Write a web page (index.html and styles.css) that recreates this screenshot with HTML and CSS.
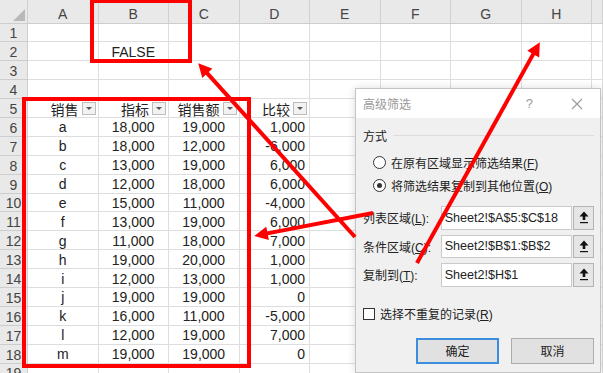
FILE: index.html
```html
<!DOCTYPE html>
<html lang="zh-CN">

<head>
  <meta charset="UTF-8">
  <meta name="viewport" content="width=device-width, initial-scale=1.0">
  <title>高级筛选</title>
  <link rel="stylesheet" href="styles.css">
</head>

<body>
  <div id="sheet">
    <div class="corner"></div><div class="col-hd">A</div><div class="col-hd">B</div><div class="col-hd">C</div><div class="col-hd">D</div><div class="col-hd">E</div><div class="col-hd">F</div><div class="col-hd">G</div><div class="col-hd">H</div><div class="col-hd"></div>

    <div class="row-hd">1</div><div class="cell"></div><div class="cell"></div><div class="cell"></div><div class="cell"></div><div class="cell"></div><div class="cell"></div><div class="cell"></div><div class="cell"></div><div class="cell"></div>
    <div class="row-hd">2</div><div class="cell"></div><div class="cell c">FALSE</div><div class="cell"></div><div class="cell"></div><div class="cell"></div><div class="cell"></div><div class="cell"></div><div class="cell"></div><div class="cell"></div>
    <div class="row-hd">3</div><div class="cell"></div><div class="cell"></div><div class="cell"></div><div class="cell"></div><div class="cell"></div><div class="cell"></div><div class="cell"></div><div class="cell"></div><div class="cell"></div>
    <div class="row-hd">4</div><div class="cell"></div><div class="cell"></div><div class="cell"></div><div class="cell"></div><div class="cell"></div><div class="cell"></div><div class="cell"></div><div class="cell"></div><div class="cell"></div>
    <div class="row-hd">5</div>
    <div class="cell th"><span>销售</span><i class="drop"></i></div>
    <div class="cell th"><span>指标</span><i class="drop"></i></div>
    <div class="cell th"><span>销售额</span><i class="drop"></i></div>
    <div class="cell th"><span>比较</span><i class="drop"></i></div>
    <div class="cell"></div><div class="cell"></div><div class="cell"></div><div class="cell"></div><div class="cell"></div>

    <div class="row-hd">6</div><div class="cell c">a</div><div class="cell c">18,000</div><div class="cell c">19,000</div><div class="cell r">1,000</div><div class="cell"></div><div class="cell"></div><div class="cell"></div><div class="cell"></div><div class="cell"></div>
    <div class="row-hd">7</div><div class="cell c">b</div><div class="cell c">18,000</div><div class="cell c">12,000</div><div class="cell r">-6,000</div><div class="cell"></div><div class="cell"></div><div class="cell"></div><div class="cell"></div><div class="cell"></div>
    <div class="row-hd">8</div><div class="cell c">c</div><div class="cell c">13,000</div><div class="cell c">19,000</div><div class="cell r">6,000</div><div class="cell"></div><div class="cell"></div><div class="cell"></div><div class="cell"></div><div class="cell"></div>
    <div class="row-hd">9</div><div class="cell c">d</div><div class="cell c">12,000</div><div class="cell c">18,000</div><div class="cell r">6,000</div><div class="cell"></div><div class="cell"></div><div class="cell"></div><div class="cell"></div><div class="cell"></div>
    <div class="row-hd">10</div><div class="cell c">e</div><div class="cell c">15,000</div><div class="cell c">11,000</div><div class="cell r">-4,000</div><div class="cell"></div><div class="cell"></div><div class="cell"></div><div class="cell"></div><div class="cell"></div>
    <div class="row-hd">11</div><div class="cell c">f</div><div class="cell c">13,000</div><div class="cell c">19,000</div><div class="cell r">6,000</div><div class="cell"></div><div class="cell"></div><div class="cell"></div><div class="cell"></div><div class="cell"></div>
    <div class="row-hd">12</div><div class="cell c">g</div><div class="cell c">11,000</div><div class="cell c">18,000</div><div class="cell r">7,000</div><div class="cell"></div><div class="cell"></div><div class="cell"></div><div class="cell"></div><div class="cell"></div>
    <div class="row-hd">13</div><div class="cell c">h</div><div class="cell c">19,000</div><div class="cell c">20,000</div><div class="cell r">1,000</div><div class="cell"></div><div class="cell"></div><div class="cell"></div><div class="cell"></div><div class="cell"></div>
    <div class="row-hd">14</div><div class="cell c">i</div><div class="cell c">12,000</div><div class="cell c">13,000</div><div class="cell r">1,000</div><div class="cell"></div><div class="cell"></div><div class="cell"></div><div class="cell"></div><div class="cell"></div>
    <div class="row-hd">15</div><div class="cell c">j</div><div class="cell c">19,000</div><div class="cell c">19,000</div><div class="cell r">0</div><div class="cell"></div><div class="cell"></div><div class="cell"></div><div class="cell"></div><div class="cell"></div>
    <div class="row-hd">16</div><div class="cell c">k</div><div class="cell c">16,000</div><div class="cell c">11,000</div><div class="cell r">-5,000</div><div class="cell"></div><div class="cell"></div><div class="cell"></div><div class="cell"></div><div class="cell"></div>
    <div class="row-hd">17</div><div class="cell c">l</div><div class="cell c">12,000</div><div class="cell c">19,000</div><div class="cell r">7,000</div><div class="cell"></div><div class="cell"></div><div class="cell"></div><div class="cell"></div><div class="cell"></div>
    <div class="row-hd">18</div><div class="cell c">m</div><div class="cell c">19,000</div><div class="cell c">19,000</div><div class="cell r">0</div><div class="cell"></div><div class="cell"></div><div class="cell"></div><div class="cell"></div><div class="cell"></div>
    <div class="row-hd">19</div><div class="cell"></div><div class="cell"></div><div class="cell"></div><div class="cell"></div><div class="cell"></div><div class="cell"></div><div class="cell"></div><div class="cell"></div><div class="cell"></div>
  </div>

  <!-- 高级筛选 对话框 -->
  <div id="dialog">
    <div class="dlg-title">
      <span class="dlg-name">高级筛选</span>
      <span class="help">?</span>
      <svg class="close" width="12" height="12" viewBox="0 0 12 12"><path d="M1 1L11 11M11 1L1 11" stroke="#9a9a9a" stroke-width="1.1" fill="none"/></svg>
    </div>
    <div class="dlg-body">
      <div class="group"><span>方式</span></div>
      <div class="opt first"><i class="radio"></i><span>在原有区域显示筛选结果(<u>F</u>)</span></div>
      <div class="opt"><i class="radio on"></i><span>将筛选结果复制到其他位置(<u>O</u>)</span></div>

      <div class="field first">
        <span class="lbl">列表区域(<u>L</u>):</span>
        <div class="ref">Sheet2!$A$5:$C$18</div>
        <div class="pick"><svg width="10" height="13" viewBox="0 0 10 13"><path d="M5 0.5L9.5 5.5H6.3V9H3.7V5.5H0.5Z" fill="#111"/><rect x="1" y="11" width="8" height="1.2" fill="#111"/></svg></div>
      </div>
      <div class="field">
        <span class="lbl">条件区域(<u>C</u>):</span>
        <div class="ref">Sheet2!$B$1:$B$2</div>
        <div class="pick"><svg width="10" height="13" viewBox="0 0 10 13"><path d="M5 0.5L9.5 5.5H6.3V9H3.7V5.5H0.5Z" fill="#111"/><rect x="1" y="11" width="8" height="1.2" fill="#111"/></svg></div>
      </div>
      <div class="field">
        <span class="lbl">复制到(<u>T</u>):</span>
        <div class="ref">Sheet2!$H$1</div>
        <div class="pick"><svg width="10" height="13" viewBox="0 0 10 13"><path d="M5 0.5L9.5 5.5H6.3V9H3.7V5.5H0.5Z" fill="#111"/><rect x="1" y="11" width="8" height="1.2" fill="#111"/></svg></div>
      </div>

      <div class="chk"><i class="box"></i><span>选择不重复的记录(<u>R</u>)</span></div>

      <div class="actions">
        <button type="button" class="btn primary">确定</button>
        <button type="button" class="btn">取消</button>
      </div>
    </div>
  </div>

  <!-- 红色标注 -->
  <div class="mark mark-b"></div>
  <div class="mark mark-list"></div>
  <svg class="arrows" width="603" height="373" viewBox="0 0 603 373">
    <defs>
      <marker id="head" viewBox="0 0 10 10" refX="3" refY="5" markerWidth="3.6" markerHeight="3.4" orient="auto">
        <path d="M0 0L10 5L0 10Z" fill="#f00"/>
      </marker>
    </defs>
    <line x1="355" y1="237" x2="204.6" y2="70.3" stroke="#f00" stroke-width="4" marker-end="url(#head)"/>
    <line x1="373" y1="213" x2="263.6" y2="234.1" stroke="#f00" stroke-width="4" marker-end="url(#head)"/>
    <line x1="417" y1="263" x2="535.2" y2="50.6" stroke="#f00" stroke-width="4" marker-end="url(#head)"/>
  </svg>
</body>

</html>
```

FILE: styles.css
```css
* {
  box-sizing: border-box;
}

html,
body {
  margin: 0;
  padding: 0;
  overflow: hidden;
}

body {
  position: relative;
  width: 603px;
  height: 373px;
  background-color: #fff;
  font-family: "Liberation Sans", "Noto Sans CJK SC", sans-serif;
  color: #222;
}

/* 表格部分 */
#sheet {
  display: grid;
  grid-template-columns: 28px repeat(8, 70.5px) 1fr;
  grid-template-rows: 23.5px;
  grid-auto-rows: 18.9px;
  font-size: 14px;
}

.corner,
.col-hd,
.row-hd {
  background-color: #e9e9e9;
  border-right: 1px solid #d0d0d0;
  border-bottom: 1px solid #cdcdcd;
  color: #444;
  display: flex;
  justify-content: center;
  align-items: center;
}

.col-hd {
  padding-top: 6px;
}

.row-hd {
  padding-top: 2px;
}

.corner {
  position: relative;
}

.corner::after {
  content: "";
  position: absolute;
  right: 2px;
  bottom: 2px;
  border-left: 12px solid transparent;
  border-bottom: 12px solid #b9b9b9;
}

.cell {
  display: flex;
  align-items: center;
  padding: 0 4px;
  padding-top: 1px;
  border-right: 1px solid #dedede;
  border-bottom: 1px solid #dedede;
  white-space: nowrap;
  overflow: hidden;
}

.c {
  justify-content: center;
}

.r {
  justify-content: flex-end;
}

.th {
  justify-content: flex-end;
  gap: 3px;
  padding-right: 2px;
}

.drop {
  position: relative;
  width: 14px;
  height: 13px;
  border: 1px solid #bdbdbd;
  background-color: #f2f2f2;
}

.drop::after {
  content: "";
  position: absolute;
  left: 3px;
  top: 4px;
  border-left: 3px solid transparent;
  border-right: 3px solid transparent;
  border-top: 3px solid #555;
}

/* 对话框 */
#dialog {
  position: absolute;
  left: 355px;
  top: 88px;
  width: 246px;
  height: 285px;
  border: 1px solid #c4c4c4;
  background-color: #f0f0f0;
  box-shadow: 0 0 8px rgba(0, 0, 0, 0.15);
  font-size: 12px;
}

.dlg-title {
  display: flex;
  align-items: center;
  height: 29px;
  padding: 0 0 0 7px;
  background-color: #fff;
  color: #999;
}

.dlg-name {
  flex: 1;
}

.help {
  margin-right: 38px;
  font-size: 13px;
}

.close {
  margin-right: 17px;
}

.dlg-body {
  display: flex;
  flex-direction: column;
  padding: 8px 6px 0 7px;
}

.group {
  display: flex;
  align-items: center;
  gap: 6px;
  height: 18px;
}

.group::after {
  content: "";
  flex: 1;
  height: 1px;
  background-color: #dcdcdc;
}

.opt {
  display: flex;
  align-items: center;
  gap: 5px;
  height: 18px;
  margin-top: 5px;
  padding-left: 10px;
}

.opt.first {
  margin-top: 9px;
}

.radio {
  position: relative;
  width: 13px;
  height: 13px;
  border: 1px solid #333;
  border-radius: 50%;
  background-color: #fff;
}

.radio.on::after {
  content: "";
  position: absolute;
  left: 3px;
  top: 3px;
  width: 5px;
  height: 5px;
  border-radius: 50%;
  background-color: #333;
}

.field {
  display: flex;
  align-items: center;
  height: 23.5px;
  margin-top: 5px;
}

.field.first {
  margin-top: 12px;
}

.lbl {
  width: 78px;
}

.ref {
  width: 132px;
  height: 100%;
  display: flex;
  align-items: center;
  padding-left: 3px;
  border: 1px solid #cacaca;
  background-color: #fff;
  font-size: 12.6px;
  white-space: nowrap;
  overflow: hidden;
}

.pick {
  width: 21px;
  height: 100%;
  margin-left: 1px;
  display: flex;
  align-items: center;
  justify-content: center;
  border: 1px solid #b4b4b4;
  background-color: #e5e5e5;
}

.chk {
  display: flex;
  align-items: center;
  gap: 5px;
  height: 18px;
  margin-top: 18px;
}

.box {
  width: 12px;
  height: 12px;
  border: 1px solid #333;
  background-color: #fff;
}

.actions {
  display: flex;
  justify-content: flex-end;
  gap: 12px;
  margin-top: 15px;
}

.btn {
  width: 83px;
  height: 26px;
  padding: 0;
  border: 1px solid #adadad;
  background-color: #e1e1e1;
  font-family: inherit;
  font-size: 12px;
  color: #222;
}

.btn.primary {
  border: 2px solid #3b8ddd;
}

/* 红框和箭头 */
.mark {
  position: absolute;
  border: 4px solid #f00;
}

.mark-b {
  left: 90px;
  top: -1px;
  width: 102px;
  height: 64px;
}

.mark-list {
  left: 22px;
  top: 97px;
  width: 229px;
  height: 271px;
}

.arrows {
  position: absolute;
  left: 0;
  top: 0;
  pointer-events: none;
}
```
